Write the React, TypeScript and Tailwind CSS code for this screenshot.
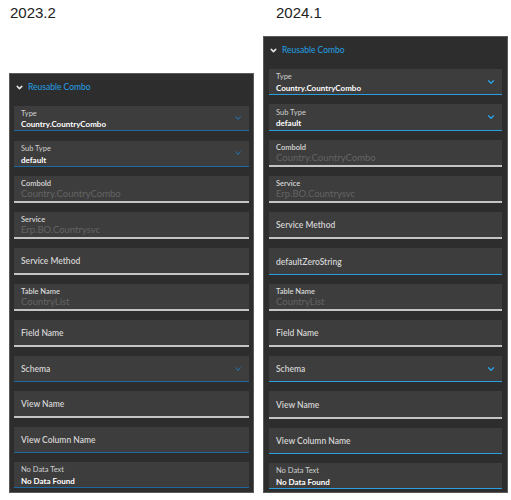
import { ChevronDown } from "lucide-react";

type FieldProps = {
  label?: string;
  value?: string;
  placeholder?: string;
  dim?: boolean;
  line: "blue" | "gray";
  chevron?: boolean;
  bright?: boolean;
};

function Field({ label, value, placeholder, dim, line, chevron, bright }: FieldProps) {
  const lineCls =
    line === "blue"
      ? bright
        ? "border-b-[1.5px] border-[#2a9fe0]"
        : "border-b-[1.5px] border-[#1d6aa0]"
      : "border-b-2 border-[#c4c4c4]";
  return (
    <div className={`relative flex flex-1 items-center bg-[#3d3d3d] pl-[7px] pr-[6px] ${lineCls}`}>
      <div className="flex flex-1 flex-col justify-center pt-[2px] leading-none">
        {label && (
          <span className={`text-[7.5px] ${dim ? "font-semibold text-[#d8d8d8]" : "text-[#cfcfcf]"}`}>
            {label}
          </span>
        )}
        {value && (
          <span
            className={
              dim
                ? "mt-[2px] text-[9.5px] text-[#646464]"
                : "mt-[3px] text-[8px] font-bold text-white"
            }
          >
            {value}
          </span>
        )}
        {placeholder && (
          <span className="text-[8.5px] font-semibold text-[#d4d4d4]">{placeholder}</span>
        )}
      </div>
      {chevron && (
        <ChevronDown
          size={10}
          strokeWidth={bright ? 3 : 2.5}
          className={bright ? "text-[#2aa3e8]" : "text-[#2270aa]"}
        />
      )}
    </div>
  );
}

function Header() {
  return (
    <div className="flex items-center gap-[4px] pl-[5px]">
      <ChevronDown size={9} strokeWidth={4} className="text-[#e6e6e6]" />
      <span className="text-[8.5px] text-[#24a0e4]">Reusable Combo</span>
    </div>
  );
}

const legacy: FieldProps[] = [
  { label: "Type", value: "Country.CountryCombo", line: "blue", chevron: true },
  { label: "Sub Type", value: "default", line: "blue", chevron: true },
  { label: "ComboId", value: "Country.CountryCombo", dim: true, line: "gray" },
  { label: "Service", value: "Erp.BO.Countrysvc", dim: true, line: "gray" },
  { placeholder: "Service Method", line: "gray" },
  { label: "Table Name", value: "CountryList", dim: true, line: "gray" },
  { placeholder: "Field Name", line: "gray" },
  { placeholder: "Schema", line: "blue", chevron: true },
  { placeholder: "View Name", line: "gray" },
  { placeholder: "View Column Name", line: "blue" },
  { label: "No Data Text", value: "No Data Found", line: "blue" },
];

const current: FieldProps[] = [
  { label: "Type", value: "Country.CountryCombo", line: "blue", chevron: true },
  { label: "Sub Type", value: "default", line: "blue", chevron: true },
  { label: "ComboId", value: "Country.CountryCombo", dim: true, line: "gray" },
  { label: "Service", value: "Erp.BO.Countrysvc", dim: true, line: "gray" },
  { placeholder: "Service Method", line: "gray" },
  { placeholder: "defaultZeroString", line: "blue" },
  { label: "Table Name", value: "CountryList", dim: true, line: "gray" },
  { placeholder: "Field Name", line: "gray" },
  { placeholder: "Schema", line: "blue", chevron: true },
  { placeholder: "View Name", line: "gray" },
  { placeholder: "View Column Name", line: "blue" },
  { label: "No Data Text", value: "No Data Found", line: "blue" },
];

export default function App() {
  return (
    <div
      className="flex h-[500px] w-[511px] bg-white"
      style={{ fontFamily: "Lato, 'Noto Sans', sans-serif" }}
    >
      {/* 2023.2 */}
      <div className="ml-[9px] flex w-[245px] flex-col">
        <div className="ml-[1px] mt-[5px] text-[15px] leading-[16px] text-[#222]" style={{ fontFamily: "'Liberation Sans', Arial, sans-serif" }}>
          2023.2
        </div>
        <div className="mt-[52px] flex h-[420px] flex-col border border-[#5a5a5a] bg-[#2d2d2d]">
          <div className="flex h-[27px] items-center">
            <Header />
          </div>
          <div className="flex flex-1 flex-col gap-[9.6px] px-[4px] pb-[4px] pt-[5px]">
            {legacy.map((f, i) => (
              <Field key={i} {...f} />
            ))}
          </div>
        </div>
      </div>

      {/* 2024.1 */}
      <div className="ml-[9px] flex w-[245px] flex-col">
        <div className="ml-[13px] mt-[5px] text-[15px] leading-[16px] text-[#222]" style={{ fontFamily: "'Liberation Sans', Arial, sans-serif" }}>
          2024.1
        </div>
        <div className="mt-[15px] flex h-[457px] flex-col border border-[#5a5a5a] bg-[#2d2d2d]">
          <div className="flex h-[26px] items-center">
            <Header />
          </div>
          <div className="flex flex-1 flex-col gap-[9px] px-[5px] pb-[3px] pt-[6px]">
            {current.map((f, i) => (
              <Field key={i} {...f} bright />
            ))}
          </div>
        </div>
      </div>
    </div>
  );
}
